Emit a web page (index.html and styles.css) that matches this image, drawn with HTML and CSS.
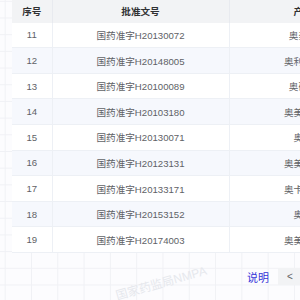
FILE: index.html
```html
<!DOCTYPE html>
<html lang="zh">
<head>
<meta charset="utf-8">
<link rel="stylesheet" href="styles.css">
</head>
<body>
<div class="page">
  <table class="grid-table">
    <colgroup>
      <col class="c-no">
      <col class="c-code">
      <col class="c-name">
    </colgroup>
    <thead>
      <tr><th>序号</th><th>批准文号</th><th>产品名</th></tr>
    </thead>
    <tbody>
      <tr><td>11</td><td>国药准字H20130072</td><td>奥美拉唑</td></tr>
      <tr><td>12</td><td>国药准字H20148005</td><td>奥利司他片</td></tr>
      <tr><td>13</td><td>国药准字H20100089</td><td>奥硝唑片</td></tr>
      <tr><td>14</td><td>国药准字H20103180</td><td>奥美沙坦片</td></tr>
      <tr><td>15</td><td>国药准字H20130071</td><td>奥硝唑</td></tr>
      <tr><td>16</td><td>国药准字H20123131</td><td>奥美拉唑钠</td></tr>
      <tr><td>17</td><td>国药准字H20133171</td><td>奥卡西平片</td></tr>
      <tr><td>18</td><td>国药准字H20153152</td><td>奥氮平</td></tr>
      <tr><td>19</td><td>国药准字H20174003</td><td>奥美沙坦酯</td></tr>
    </tbody>
  </table>
  <div class="pager">
    <span class="pager-link">说明</span>
    <span class="pager-btn">&lt;</span>
  </div>
  <div class="watermark">国家药监局NMPA</div>
</div>
</body>
</html>
```
FILE: styles.css
```css
html, body {
  margin: 0;
  padding: 0;
}
body {
  width: 300px;
  height: 300px;
  overflow: hidden;
  background-color: #fcfcfe;
  background-image:
    linear-gradient(to right, #f0f1f5 1px, transparent 1px),
    linear-gradient(to bottom, #f0f1f5 1px, transparent 1px);
  background-size: 26.3px 16.7px;
  background-position: 4.7px 0.8px;
  font-family: "Liberation Sans", "Noto Sans CJK SC", sans-serif;
}
.page {
  position: relative;
  width: 400px;
  height: 300px;
}
.grid-table {
  margin-left: 12px;
  width: 375px;
  border-collapse: collapse;
  table-layout: fixed;
  font-size: 9.6px;
  color: #606266;
  background: #fff;
}
.c-no { width: 40px; }
.c-code { width: 177px; }
.c-name { width: 158px; }
.grid-table th {
  height: 22.7px;
  padding: 0;
  background: #f2f3f5;
  color: #303133;
  font-weight: bold;
  text-align: center;
  border-right: 1px solid #e8eaef;
  white-space: nowrap;
  overflow: hidden;
}
.grid-table td {
  height: 24.6px;
  padding: 0;
  text-align: center;
  border-right: 1px solid #edf0f5;
  border-bottom: 1px solid #edf0f5;
  white-space: nowrap;
  overflow: hidden;
}
.grid-table tbody tr:nth-child(even) td {
  background: #f6f8fd;
}
.pager {
  display: flex;
  align-items: center;
  gap: 9px;
  margin-top: 15px;
  padding-left: 247px;
  white-space: nowrap;
}
.pager-link {
  flex-shrink: 0;
  color: #3535d8;
  font-size: 11px;
}
.pager-btn {
  flex-shrink: 0;
  display: flex;
  align-items: center;
  justify-content: center;
  width: 24px;
  height: 17px;
  background: #f2f3f5;
  color: #606266;
  font-size: 10px;
}
.watermark {
  position: absolute;
  left: 118px;
  top: 286px;
  transform: rotate(-16deg);
  transform-origin: left bottom;
  color: #e6e8ed;
  font-size: 12px;
  white-space: nowrap;
}
```
